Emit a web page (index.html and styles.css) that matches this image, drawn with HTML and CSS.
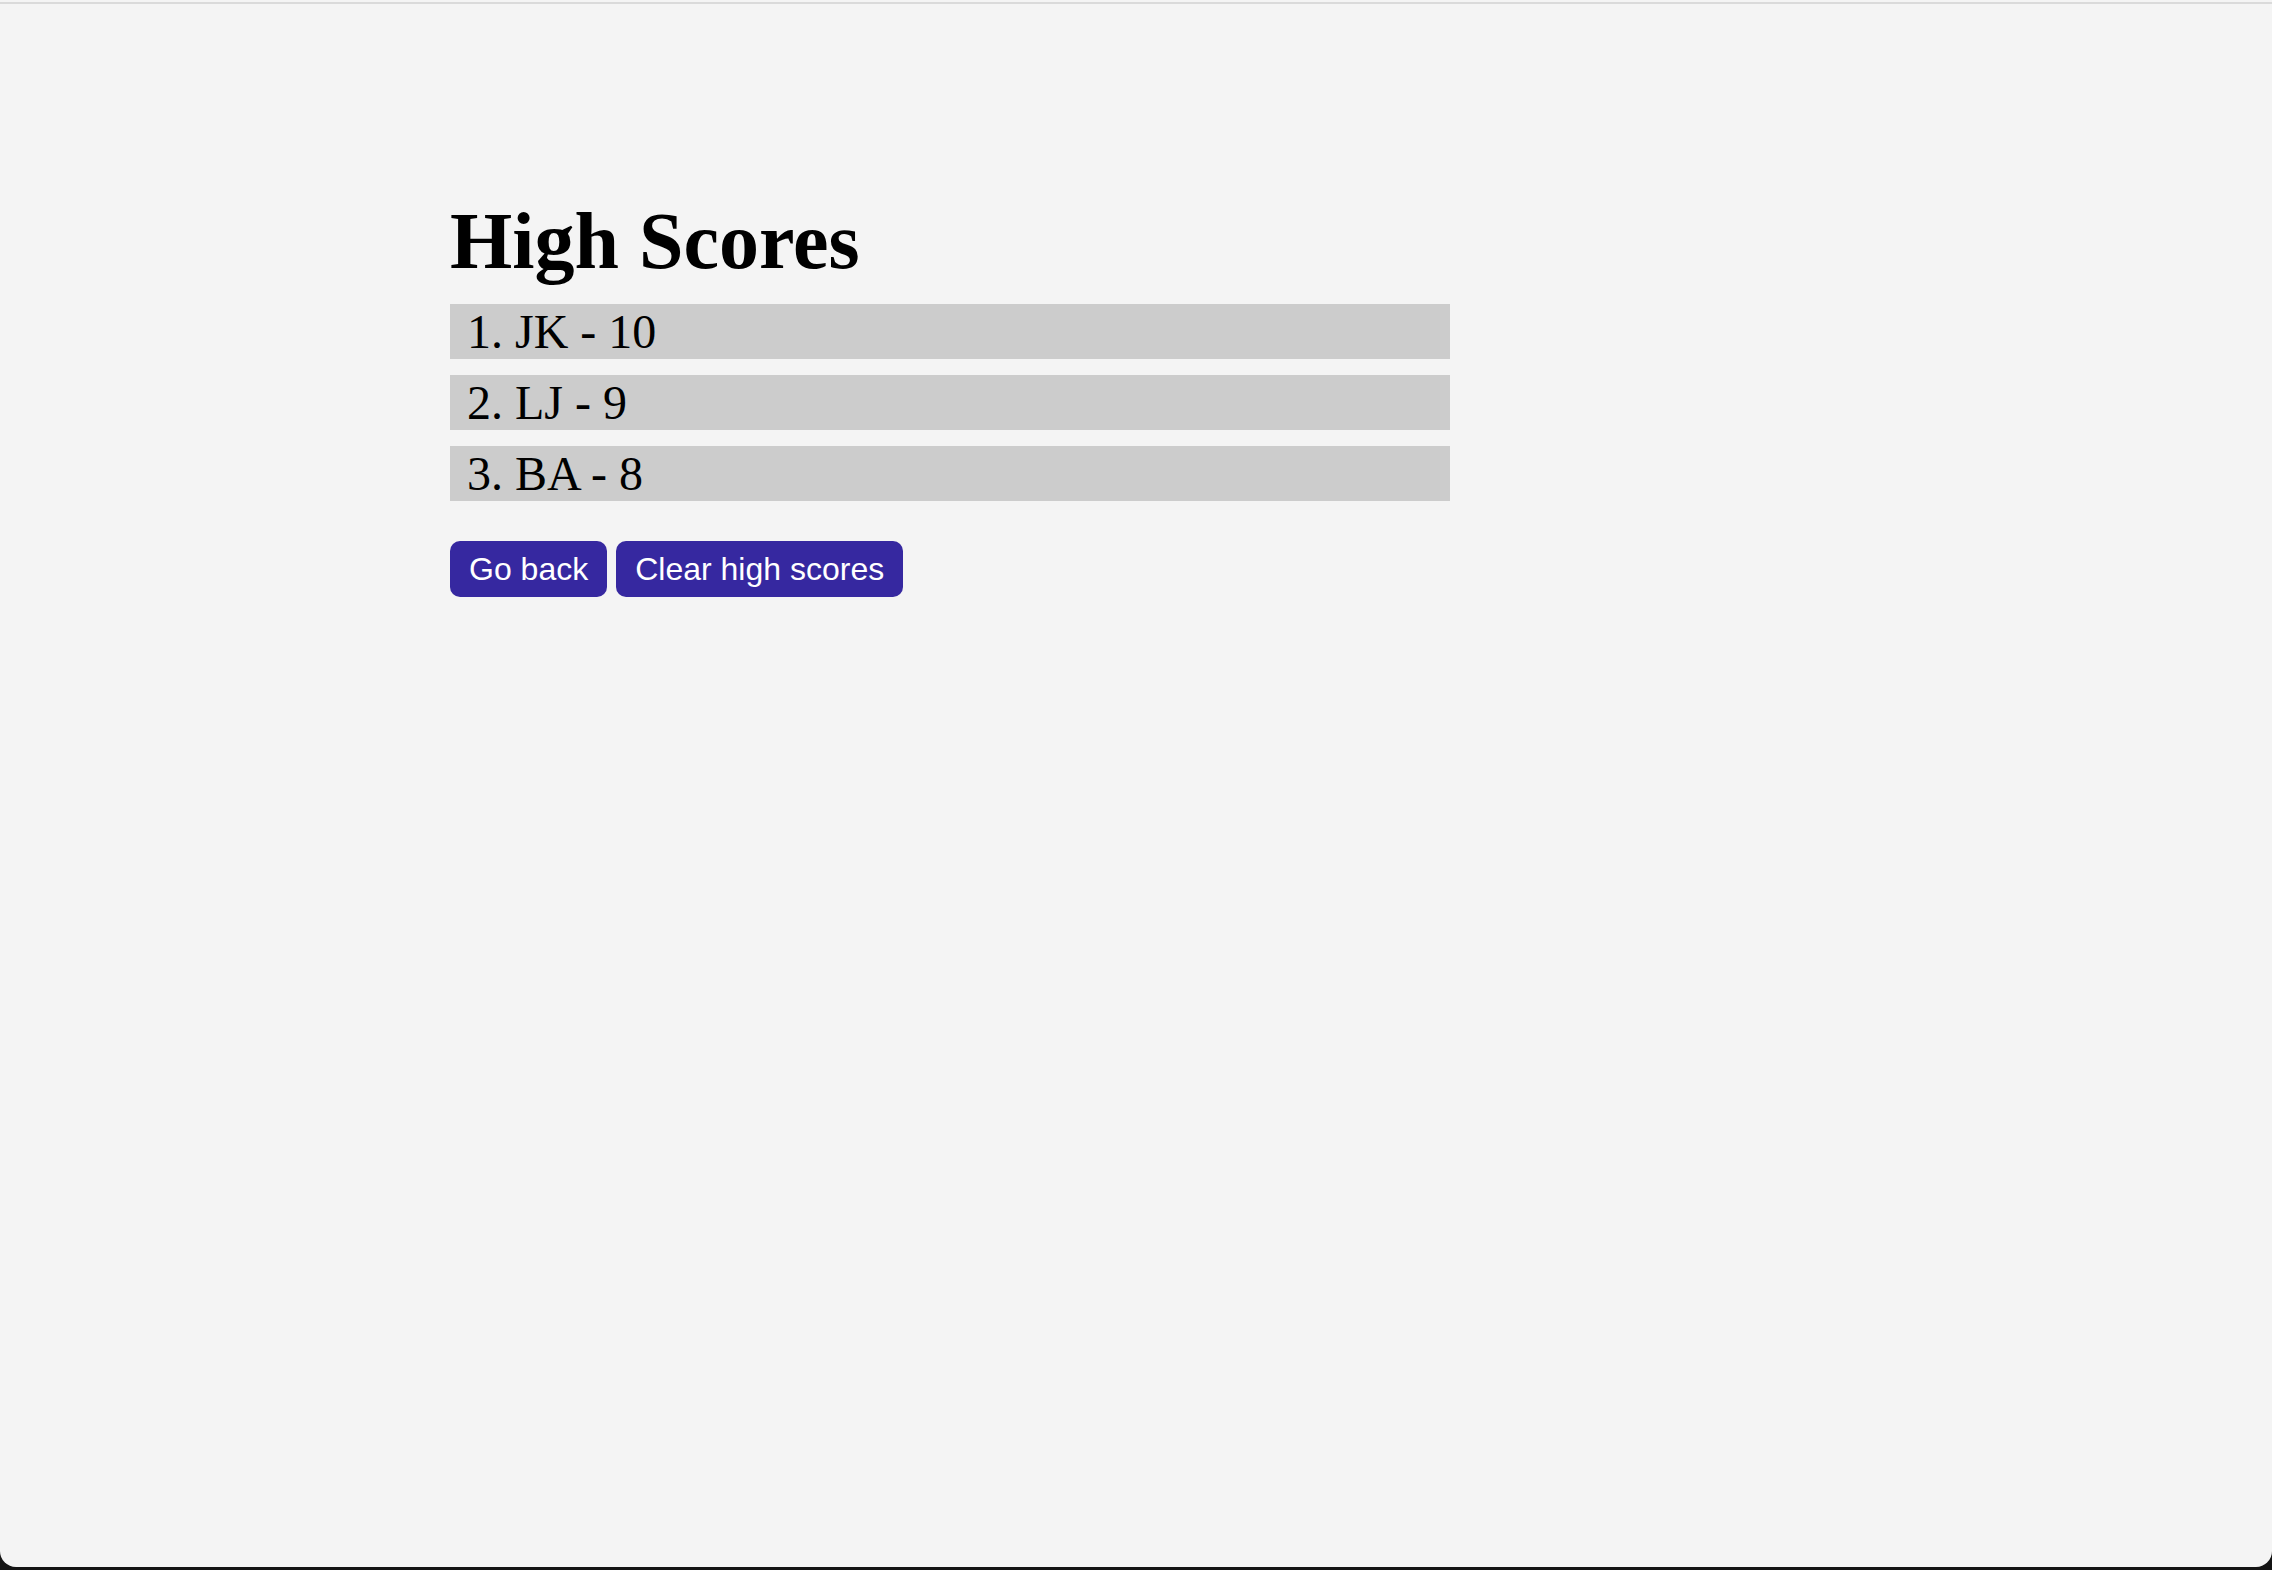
FILE: index.html
```html
<!DOCTYPE html>
<html lang="en">
<head>
<meta charset="utf-8">
<title>High Scores</title>
<link rel="stylesheet" href="styles.css">
</head>
<body>
<div class="page">
  <div class="topline"></div>
  <main class="content">
    <h1 class="title">High Scores</h1>
    <ol class="scores">
      <li class="score">1. JK - 10</li>
      <li class="score">2. LJ - 9</li>
      <li class="score">3. BA - 8</li>
    </ol>
    <div class="actions">
      <button class="btn">Go back</button>
      <button class="btn">Clear high scores</button>
    </div>
  </main>
</div>
</body>
</html>
```
FILE: styles.css
```css
html, body {
  margin: 0;
  padding: 0;
}
body {
  background: #141414;
  height: 1570px;
  overflow: hidden;
}
.page {
  background: #f4f4f4;
  height: 1567px;
  border-radius: 0 0 16px 16px;
  padding-top: 2px;
  box-sizing: border-box;
}
.topline {
  height: 2px;
  background: #dadada;
}
.content {
  padding: 191px 0 0 450px;
  width: 1000px;
}
.title {
  font-family: "Liberation Serif", "Times New Roman", serif;
  font-weight: bold;
  font-size: 80px;
  line-height: 92px;
  margin: 0 0 17px;
  color: #000;
}
.scores {
  list-style: none;
  margin: 0;
  padding: 0;
}
.score {
  background: #cccccc;
  font-family: "Liberation Serif", "Times New Roman", serif;
  font-size: 48px;
  line-height: 55px;
  padding: 0 17px;
  margin-bottom: 16px;
  color: #000;
}
.actions {
  display: flex;
  gap: 9px;
  margin-top: 40px;
}
.btn {
  background: #3628a0;
  color: #fff;
  border: none;
  border-radius: 10px;
  font-family: "Liberation Sans", Arial, sans-serif;
  font-size: 32px;
  line-height: 56px;
  height: 56px;
  padding: 0 19px;
  margin: 0;
}
```
